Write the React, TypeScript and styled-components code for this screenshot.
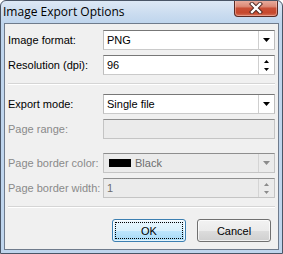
import React from "react";
import styled, { createGlobalStyle, css } from "styled-components";

const GlobalStyle = createGlobalStyle`
  html, body {
    margin: 0;
    padding: 0;
    background: #ffffff;
  }
  body {
    font-family: "Liberation Sans", Arial, sans-serif;
    font-size: 11px;
  }
`;

const Window = styled.div`
  box-sizing: border-box;
  width: 283px;
  height: 254px;
  border: 1px solid #4a5566;
  border-radius: 6px 6px 0 0;
  background: linear-gradient(#dde8f5 0px, #c9dbef 14px, #bfd5ed 22px, #bfd5ed 100%);
  display: flex;
  flex-direction: column;
  overflow: hidden;
`;

const TitleBar = styled.div`
  height: 22px;
  flex: none;
  display: flex;
  justify-content: space-between;
  align-items: flex-start;
  padding-left: 2px;
`;

const Title = styled.div`
  font-family: "Open Sans", "Liberation Sans", sans-serif;
  font-size: 12px;
  line-height: 22px;
  color: #000000;
  padding-top: 0px;
`;

const CloseButton = styled.div`
  box-sizing: border-box;
  width: 44px;
  height: 17px;
  margin-top: -1px;
  margin-right: 4px;
  border: 1px solid #5a2a24;
  border-top: none;
  border-radius: 0 0 4px 4px;
  background: linear-gradient(#eab0a2 0%, #dc8a77 40%, #c94f36 52%, #c6482d 80%, #d4735c 100%);
  box-shadow: inset 0 0 0 1px rgba(255, 210, 200, 0.45);
  display: flex;
  align-items: center;
  justify-content: center;
`;

const Client = styled.div`
  flex: 1;
  margin: 0 3px 3px 3px;
  border: 1px solid #6f7b8c;
  background: #f0f0f0;
  display: flex;
  flex-direction: column;
  padding: 6px 3px 0 3px;
`;

const Group = styled.div<{ $top?: number }>`
  display: grid;
  grid-template-columns: 95px 1fr;
  grid-auto-rows: 20px;
  row-gap: 5px;
  margin-top: ${({ $top }) => $top ?? 0}px;
`;

const Label = styled.div<{ $disabled?: boolean }>`
  display: flex;
  align-items: center;
  color: ${({ $disabled }) => ($disabled ? "#8a8a8a" : "#000000")};
  white-space: nowrap;
`;

const Field = styled.div<{ $disabled?: boolean }>`
  box-sizing: border-box;
  height: 20px;
  display: flex;
  align-items: center;
  border: 1px solid #bdbdbd;
  border-top-color: #777777;
  border-bottom-color: #cacaca;
  background: ${({ $disabled }) => ($disabled ? "#ebebeb" : "#ffffff")};
  color: ${({ $disabled }) => ($disabled ? "#6d6d6d" : "#000000")};
  ${({ $disabled }) =>
    $disabled &&
    css`
      border-top-color: #8e8e8e;
      border-color: #c4c4c4;
      border-top-color: #8e8e8e;
    `}
`;

const FieldText = styled.span`
  flex: 1;
  padding-left: 3px;
  white-space: nowrap;
  overflow: hidden;
`;

const Swatch = styled.span`
  width: 22px;
  height: 8px;
  margin-left: 5px;
  margin-right: 1px;
  background: #000000;
  flex: none;
`;

const SideButton = styled.div<{ $disabled?: boolean }>`
  width: 15px;
  height: 100%;
  flex: none;
  border-left: 1px solid ${({ $disabled }) => ($disabled ? "#d4d4d4" : "#cfcfcf")};
  display: flex;
  flex-direction: column;
  align-items: center;
  justify-content: center;
  gap: 5px;
`;

const Separator = styled.div<{ $top: number; $bottom: number }>`
  height: 0;
  border-top: 1px solid #d5d5d5;
  border-bottom: 1px solid #ffffff;
  margin: ${({ $top, $bottom }) => `${$top}px 0 ${$bottom}px 0`};
`;

const Footer = styled.div`
  display: flex;
  justify-content: flex-end;
  gap: 11px;
  padding-right: 4px;
`;

const Button = styled.div<{ $default?: boolean }>`
  box-sizing: border-box;
  width: 74px;
  height: 23px;
  border-radius: 3px;
  padding: 2px;
  display: flex;
  color: #000000;
  ${({ $default }) =>
    $default
      ? css`
          border: 1px solid #3c7fb1;
          background: linear-gradient(#eaf6fd 0%, #d9f0fc 50%, #bee6fd 51%, #a7d9f5 100%);
          box-shadow: inset 0 0 0 1px rgba(255, 255, 255, 0.7);
        `
      : css`
          border: 1px solid #707070;
          background: linear-gradient(#f2f2f2 0%, #ebebeb 50%, #dddddd 51%, #cfcfcf 100%);
          box-shadow: inset 0 0 0 1px rgba(255, 255, 255, 0.7);
        `}
`;

const ButtonFace = styled.div<{ $focused?: boolean }>`
  flex: 1;
  display: flex;
  align-items: center;
  justify-content: center;
  border: 1px dotted ${({ $focused }) => ($focused ? "#000000" : "transparent")};
`;

const DownArrow = ({ color = "#000" }: { color?: string }) => (
  <svg width="7" height="4" viewBox="0 0 7 4">
    <polygon points="0,0 7,0 3.5,4" fill={color} />
  </svg>
);

const SpinArrows = ({ color = "#000" }: { color?: string }) => (
  <>
    <svg width="5" height="3" viewBox="0 0 5 3">
      <polygon points="0,3 5,3 2.5,0" fill={color} />
    </svg>
    <svg width="5" height="3" viewBox="0 0 5 3">
      <polygon points="0,0 5,0 2.5,3" fill={color} />
    </svg>
  </>
);

const CloseGlyph = () => (
  <svg width="14" height="12" viewBox="0 0 14 12">
    <path d="M3 2 L11 10 M11 2 L3 10" stroke="#4a2520" strokeWidth="4.2" strokeLinecap="square" />
    <path d="M3 2 L11 10 M11 2 L3 10" stroke="#ffffff" strokeWidth="2.4" strokeLinecap="square" />
  </svg>
);

type RowProps = {
  label: string;
  value: string;
  kind: "combo" | "spin" | "text";
  disabled?: boolean;
  swatch?: boolean;
};

const Row = ({ label, value, kind, disabled, swatch }: RowProps) => {
  const arrow = disabled ? "#8b8b8b" : "#000000";
  return (
    <>
      <Label $disabled={disabled}>{label}</Label>
      <Field $disabled={disabled}>
        {swatch && <Swatch />}
        <FieldText>{value}</FieldText>
        {kind === "combo" && (
          <SideButton $disabled={disabled}>
            <DownArrow color={arrow} />
          </SideButton>
        )}
        {kind === "spin" && (
          <SideButton $disabled={disabled}>
            <SpinArrows color={arrow} />
          </SideButton>
        )}
      </Field>
    </>
  );
};

export default function App() {
  return (
    <>
      <GlobalStyle />
      <Window>
        <TitleBar>
          <Title>Image Export Options</Title>
          <CloseButton>
            <CloseGlyph />
          </CloseButton>
        </TitleBar>
        <Client>
          <Group>
            <Row label="Image format:" value="PNG" kind="combo" />
            <Row label="Resolution (dpi):" value="96" kind="spin" />
          </Group>
          <Separator $top={8} $bottom={9} />
          <Group>
            <Row label="Export mode:" value="Single file" kind="combo" />
            <Row label="Page range:" value="" kind="text" disabled />
          </Group>
          <Group $top={14}>
            <Row label="Page border color:" value="Black" kind="combo" disabled swatch />
            <Row label="Page border width:" value="1" kind="spin" disabled />
          </Group>
          <Separator $top={8} $bottom={11} />
          <Footer>
            <Button $default>
              <ButtonFace $focused>OK</ButtonFace>
            </Button>
            <Button>
              <ButtonFace>Cancel</ButtonFace>
            </Button>
          </Footer>
        </Client>
      </Window>
    </>
  );
}
